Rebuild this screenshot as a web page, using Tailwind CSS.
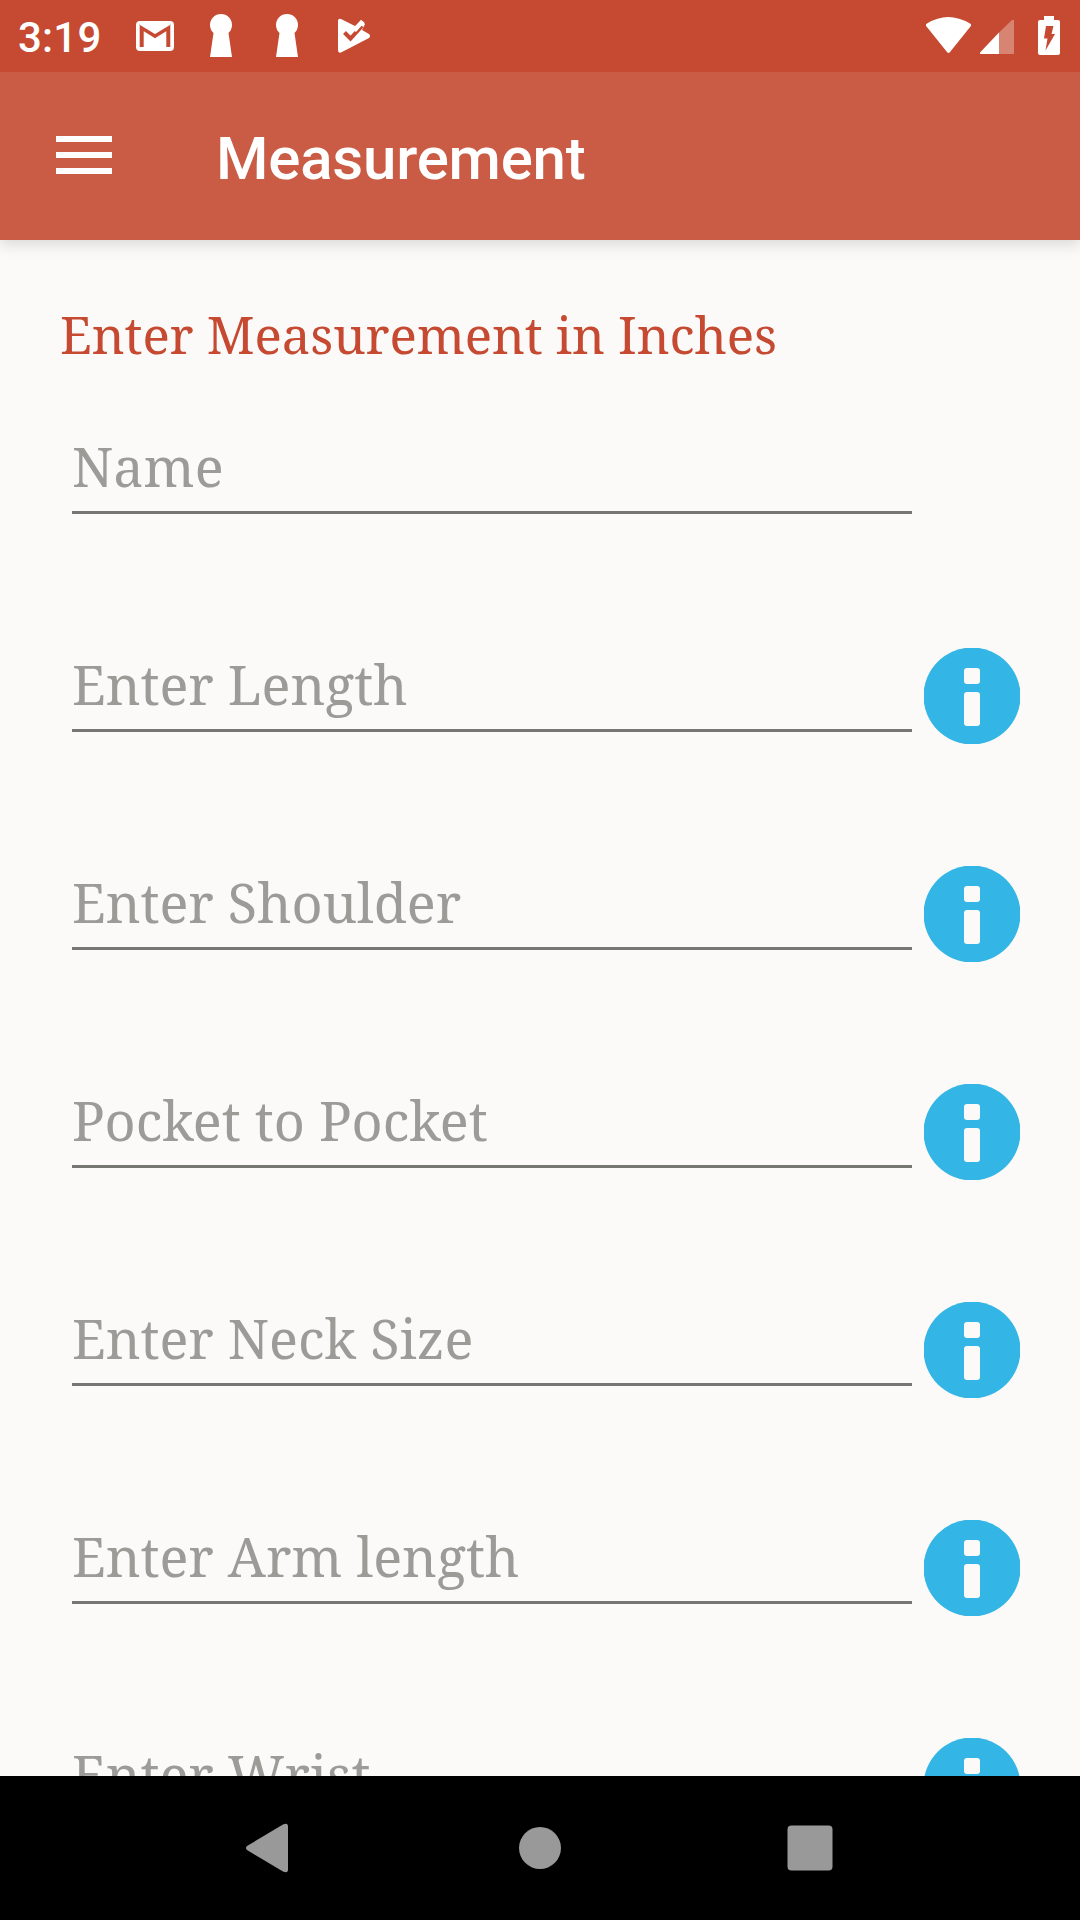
<!DOCTYPE html>
<html lang="en">
<head>
    <meta charset="UTF-8">
    <meta name="viewport" content="width=device-width, initial-scale=1.0">
    <title>Measurement</title>
    <script src="https://cdn.jsdelivr.net/npm/@tailwindcss/browser@4"></script>
</head>
<body class="bg-[#fbfaf8]">
    <div class="w-[1080px] h-[1920px] flex flex-col overflow-hidden">
        <!-- Status bar -->
        <div class="relative z-20 h-[72px] shrink-0 bg-[#c54a31] flex items-center text-white">
            <span class="w-[136px] pl-[18px] font-[Roboto,sans-serif] font-medium text-[42px] leading-[72px] tracking-[0.2px] pt-[4px]">3:19</span>
            <svg class="w-[250px] h-[72px]" viewBox="136 0 250 72" fill="currentColor">
                <rect x="136" y="21" width="38" height="30" rx="4"/>
                <path d="M141.700 47V27.500L155 36L168.300 27.500V47" fill="none" stroke="#c54a31" stroke-width="4"/>
                <path d="M140 25L155 34L170 25V21H140Z"/>
                <path d="M213.500 33a11 11 0 1 1 15 0L232 57H210Z"/>
                <path d="M279.500 33a11 11 0 1 1 15 0L298 57H276Z"/>
                <path d="M338 21q0-3 3-2L355 26L361 20L365 24L362 30L369 34q2 2 0 4L342 52q-4 2-4-2Z"/>
                <path d="M344.500 32.500L350.500 38.500L362 26" fill="none" stroke="#c54a31" stroke-width="4"/>
                <path d="M353 30L361 20L364.500 22.500L356 32Z"/>
            </svg>
            <svg class="w-[154px] h-[72px] ml-auto" viewBox="926 0 154 72" fill="currentColor">
                <path d="M926.500 26.500Q925 24.500 927 23.500Q948 10.500 970 23.500Q972 24.500 970.500 26.500L950 52q-1.500 1.800-3 0Z"/>
                <path d="M999 32.500V54H981q-2-.5-.5-2Z"/>
                <path d="M999 32.500L1012 20q2-1 2 1V54H999Z" fill-opacity=".32"/>
                <path d="M1044 16h10v4h4q2 0 2 2v31q0 2-2 2h-18q-2 0-2-2v-31q0-2 2-2h4Z"/>
                <path d="M1046 26H1053.500L1051.500 34H1055L1045.500 50.500L1047.500 38.500H1044Z" fill="#c54a31"/>
            </svg>
        </div>

        <!-- App bar -->
        <div class="relative z-10 h-[168px] shrink-0 bg-[#ca5c46] flex items-center pl-[56px] shadow-[0_4px_14px_rgba(0,0,0,0.14)]">
            <div class="flex flex-col gap-[10px] w-[56px] -mt-[2px]">
                <div class="h-[6px] bg-white"></div>
                <div class="h-[6px] bg-white"></div>
                <div class="h-[6px] bg-white"></div>
            </div>
            <h1 class="ml-[104px] pt-[6px] font-[Roboto,sans-serif] font-medium text-[60px] leading-[70px] tracking-[-0.2px] text-white">Measurement</h1>
        </div>

        <!-- Form -->
        <div class="h-[1536px] shrink-0 overflow-hidden font-['Noto_Serif','DejaVu_Serif_Condensed','DejaVu_Serif',serif]">
            <h2 class="h-[190px] pt-[58px] pl-[60px] text-[51px] leading-[72px] tracking-[-0.08px] text-[#c54a31] whitespace-nowrap">Enter Measurement in Inches</h2>
            <div id="fields" class="flex flex-col gap-[122px]"></div>
        </div>

        <!-- Navigation bar -->
        <div class="h-[144px] shrink-0 bg-black">
            <svg class="w-full h-full" viewBox="0 0 1080 144" fill="#999999">
                <path d="M247 70L283 48.500q5-2 5 2V93.500q0 4-5 2L247 74q-2-2 0-4Z"/>
                <circle cx="540" cy="72" r="21"/>
                <rect x="787.500" y="49.500" width="45" height="45" rx="4"/>
            </svg>
        </div>
    </div>

    <script>
        const fields = [
            { label: 'Name', info: false },
            { label: 'Enter Length', info: true },
            { label: 'Enter Shoulder', info: true },
            { label: 'Pocket to Pocket', info: true },
            { label: 'Enter Neck Size', info: true },
            { label: 'Enter Arm length', info: true },
            { label: 'Enter Wrist', info: true },
        ];

        const infoIcon = `
            <svg class="w-[96px] h-[96px]" viewBox="0 0 96 96">
                <circle cx="48" cy="48" r="48.500" fill="#33b5e5"/>
                <rect x="40" y="20" width="16" height="16" rx="3" fill="#fbfaf8"/>
                <rect x="40" y="44" width="16" height="34" rx="3" fill="#fbfaf8"/>
            </svg>`;

        document.getElementById('fields').innerHTML = fields.map(field => `
            <div class="flex h-[96px] gap-[12px] pl-[72px]">
                <div class="w-[840px] h-[84px] border-b-3 border-[#767673] text-[54px] leading-[72px] text-[#9c9b98] whitespace-nowrap">${field.label}</div>
                ${field.info ? infoIcon : ''}
            </div>
        `).join('');
    </script>
</body>
</html>
